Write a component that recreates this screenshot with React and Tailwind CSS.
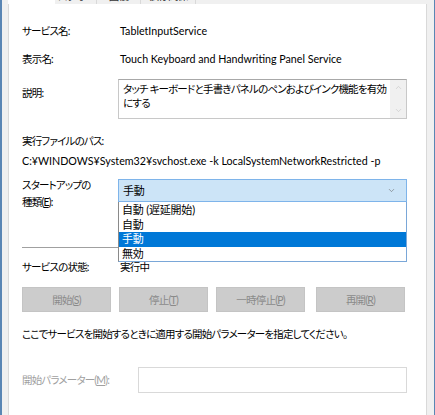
import { ChevronDown, ChevronUp } from 'lucide-react';

const latin = "font-['Lato','Noto_Sans_CJK_JP',sans-serif] text-[10.7px]";
const jp = "font-['Lato','Noto_Sans_CJK_JP',sans-serif] [font-feature-settings:'palt'] text-[10.5px] tracking-[-0.8px]";
const listFont = "font-['Lato','Noto_Sans_CJK_JP',sans-serif] text-[11px] tracking-[-0.2px]";

const tabs = [
  { label: '全般', w: 'w-[47px]', active: true },
  { label: 'ログオン', w: 'w-[42px]' },
  { label: '回復', w: 'w-[44px]' },
  { label: '依存関係', w: 'w-[55px]' },
];

const options = ['自動 (遅延開始)', '自動', '手動', '無効'];

function Key({ k }) {
  return (
    <>
      (<span className="underline">{k}</span>)
    </>
  );
}

function Btn({ children, className = '' }) {
  return (
    <div className={`w-[89px] shrink-0 h-[25px] bg-[#cccccc] border border-[#c4c4c4] flex items-center justify-center text-[#8a8a8a] ${jp} ${className}`}>
      {children}
    </div>
  );
}

export default function App() {
  return (
    <div className="w-[435px] h-[415px] overflow-hidden bg-[#f0f0f0] flex border-l-2 border-r border-[#5a86b4] text-black">
      <div className="flex-1 min-w-0 flex flex-col pl-[6px] pr-[7px]">
        {/* tabs, only the bottom edge shows */}
        <div className="h-[4px] flex overflow-hidden">
          {tabs.map((t) => (
            <div
              key={t.label}
              className={`${t.w} h-[4px] overflow-hidden flex justify-center ${t.active ? 'bg-white' : 'bg-[#f0f0f0] border-r border-[#d9d9d9]'}`}
            >
              <span className={`leading-[16px] -mt-[12px] text-[#333] ${jp}`}>{t.active ? '' : t.label}</span>
            </div>
          ))}
        </div>

        {/* page */}
        <div className="flex-1 min-w-0 overflow-hidden bg-white border-x border-[#d9d9d9] pl-[13px] pr-[19px] flex flex-col leading-[16px]">
          <div className="mt-[19px] flex h-[16px]">
            <div className={`w-[96px] shrink-0 ${jp}`}>サービス名:</div>
            <div className={`pl-[2px] ${latin}`}>TabletInputService</div>
          </div>
          <div className="mt-[12px] flex h-[16px]">
            <div className={`w-[96px] shrink-0 ${jp}`}>表示名:</div>
            <div className={`pl-[2px] ${latin}`}>Touch Keyboard and Handwriting Panel Service</div>
          </div>

          <div className="mt-[12px] flex">
            <div className={`w-[96px] shrink-0 pt-[6px] ${jp}`}>説明:</div>
            <div className="flex-1 min-w-0 h-[40px] border border-[#c8c8c8] border-t-[#a8a8a8] flex">
              <div className={`flex-1 min-w-0 pl-[4px] pt-[2px] leading-[14px] whitespace-nowrap ${jp}`}>
                タッチ キーボードと手書きパネルのペンおよびインク機能を有効
                <br />
                にする
              </div>
              <div className="w-[16px] shrink-0 bg-[#f0f0f0] flex flex-col items-center justify-between py-[3px] text-[#c0c0c0]">
                <ChevronUp size={9} strokeWidth={1.5} />
                <ChevronDown size={9} strokeWidth={1.5} />
              </div>
            </div>
          </div>

          <div className={`mt-[14px] h-[16px] ${jp}`}>実行ファイルのパス:</div>
          <div className={`mt-[4px] h-[16px] whitespace-nowrap ${latin}`}>C:¥WINDOWS¥System32¥svchost.exe -k LocalSystemNetworkRestricted -p</div>

          <div className="mt-[10px] flex">
            <div className={`w-[96px] shrink-0 -mt-[2px] leading-[17px] ${jp}`}>
              スタートアップの
              <br />
              種類<Key k="E" />:
            </div>
            <div className="flex-1 min-w-0 relative self-start">
              <div className="h-[23px] bg-[#cce4f7] border border-[#7eb4ea] flex items-center pl-[4px] pr-[10px]">
                <span className={`flex-1 ${listFont}`}>手動</span>
                <ChevronDown size={9} strokeWidth={1.5} className="text-[#666]" />
              </div>
              {/* open list */}
              <div className="absolute left-0 right-0 top-[23px] bg-white border border-[#7aa7d8] border-t-0 border-l-[#8a8a8a] pt-px z-10">
                {options.map((o) => (
                  <div
                    key={o}
                    className={`h-[14.5px] leading-[14.5px] pl-[3px] ${listFont} ${o === '手動' ? 'bg-[#0078d7] text-white' : ''}`}
                  >
                    {o}
                  </div>
                ))}
              </div>
            </div>
          </div>

          <div className="mt-[36px] h-px bg-[#a0a0a0]" />

          <div className="mt-[11px] flex h-[16px]">
            <div className={`w-[96px] shrink-0 ${jp}`}>サービスの状態:</div>
            <div className={`pl-[2px] ${jp}`}>実行中</div>
          </div>

          <div className="mt-[12px] flex">
            <Btn>開始<Key k="S" /></Btn>
            <Btn className="ml-[8px]">停止<Key k="T" /></Btn>
            <Btn className="ml-[8px]">一時停止<Key k="P" /></Btn>
            <Btn className="ml-[11px]">再開<Key k="R" /></Btn>
          </div>

          <div className={`mt-[14px] h-[16px] whitespace-nowrap ${jp}`}>
            ここでサービスを開始するときに適用する開始パラメーターを指定してください。
          </div>

          <div className="mt-[25px] flex items-center">
            <div className={`w-[116px] shrink-0 text-[#a0a0a0] ${jp}`}>
              開始パラメーター<Key k="M" />:
            </div>
            <div className="flex-1 min-w-0 h-[26px] border border-[#d9d9d9] bg-white" />
          </div>
        </div>
      </div>
    </div>
  );
}
